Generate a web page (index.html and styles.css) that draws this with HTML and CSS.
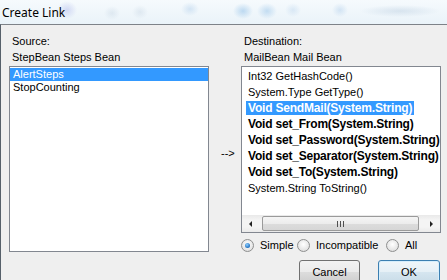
FILE: index.html
```html
<!DOCTYPE html>
<html lang="en">
<head>
    <meta charset="UTF-8">
    <title>Create Link</title>
    <link rel="stylesheet" href="styles.css">
</head>
<body>
    <div class="dialog">
        <div class="titlebar">
            <span class="title">Create Link</span>
        </div>

        <div class="client">
            <div class="pane">
                <div class="caption">Source:</div>
                <div class="caption">StepBean Steps Bean</div>
                <ul class="listbox source-list">
                    <li class="selected">AlertSteps</li>
                    <li>StopCounting</li>
                </ul>
            </div>

            <div class="link-arrow">--&gt;</div>

            <div class="pane">
                <div class="caption">Destination:</div>
                <div class="caption">MailBean Mail Bean</div>
                <div class="listbox dest-list">
                    <ul class="members">
                        <li><span>Int32 GetHashCode()</span></li>
                        <li><span>System.Type GetType()</span></li>
                        <li class="match selected"><span>Void SendMail(System.String)</span></li>
                        <li class="match"><span>Void set_From(System.String)</span></li>
                        <li class="match"><span>Void set_Password(System.String)</span></li>
                        <li class="match"><span>Void set_Separator(System.String)</span></li>
                        <li class="match"><span>Void set_To(System.String)</span></li>
                        <li><span>System.String ToString()</span></li>
                    </ul>
                    <div class="hscroll">
                        <div class="scroll-btn"><i class="tri-left"></i></div>
                        <div class="scroll-track">
                            <div class="scroll-thumb"><span class="grip"></span></div>
                        </div>
                        <div class="scroll-btn"><i class="tri-right"></i></div>
                    </div>
                </div>

                <div class="filters">
                    <label class="radio simple checked"><span class="dot"></span>Simple</label>
                    <label class="radio incompatible"><span class="dot"></span>Incompatible</label>
                    <label class="radio"><span class="dot"></span>All</label>
                </div>

                <div class="buttons">
                    <button class="btn cancel">Cancel</button>
                    <button class="btn ok">OK</button>
                </div>
            </div>
        </div>
    </div>
</body>
</html>
```

FILE: styles.css
```css
body {
    margin: 0;
    padding: 0;
    width: 447px;
    height: 280px;
    overflow: hidden;
    font-family: "Liberation Sans", Arial, sans-serif;
    font-size: 11px;
    color: #000;
    background-color: #efefef;
}

.dialog {
    display: flex;
    flex-direction: column;
    height: 280px;
    overflow: hidden;
}

/* aero glass caption, blurred desktop behind it */
.titlebar {
    flex-shrink: 0;
    height: 24px;
    display: flex;
    align-items: center;
    padding-left: 2px;
    background-color: #f2f7fb;
    background-image:
        radial-gradient(ellipse 10px 9px at 67px 10px, rgba(150, 160, 230, 0.35), transparent),
        radial-gradient(ellipse 8px 7px at 112px 13px, rgba(170, 190, 210, 0.25), transparent),
        radial-gradient(ellipse 8px 7px at 140px 12px, rgba(170, 190, 210, 0.25), transparent),
        radial-gradient(ellipse 9px 7px at 190px 9px, rgba(120, 170, 220, 0.25), transparent),
        radial-gradient(ellipse 10px 8px at 243px 11px, rgba(90, 160, 220, 0.35), transparent),
        radial-gradient(ellipse 10px 8px at 267px 11px, rgba(90, 160, 220, 0.3), transparent),
        radial-gradient(ellipse 8px 7px at 293px 10px, rgba(120, 170, 220, 0.2), transparent),
        radial-gradient(ellipse 8px 7px at 340px 10px, rgba(120, 170, 220, 0.25), transparent),
        radial-gradient(ellipse 40px 6px at 400px 11px, rgba(140, 170, 200, 0.25), transparent),
        linear-gradient(#f6fafd, #eaf3f9);
}

.title {
    font-family: "Noto Sans", "Open Sans", sans-serif;
    font-size: 12px;
    color: #000;
}

.client {
    flex: 1;
    min-height: 0;
    display: flex;
    align-items: flex-start;
    padding: 8px 0 0 8px;
    border-top: 1px solid #7d8288;
    border-left: 1px solid #56606a;
    background-color: #efefef;
}

.pane {
    width: 200px;
    display: flex;
    flex-direction: column;
}

.pane > * {
    flex-shrink: 0;
}

.caption {
    height: 16px;
    line-height: 16px;
    padding-left: 3px;
}

.listbox {
    margin: 1px 0 0 0;
    padding: 0;
    list-style: none;
    background-color: #fff;
    border: 1px solid #828790;
    box-sizing: border-box;
}

.source-list {
    height: 186px;
    padding-top: 1px;
}

.source-list li {
    height: 13px;
    line-height: 13px;
    padding-left: 3px;
}

.source-list li.selected {
    background-color: #3399ff;
    color: #fff;
}

.link-arrow {
    width: 20px;
    padding: 113px 0 0 12px;
    line-height: 14px;
}

.dest-list {
    height: 167px;
    display: flex;
    flex-direction: column;
}

.members {
    flex: 1;
    margin: 0;
    padding: 1px 0 0 4px;
    list-style: none;
    overflow: hidden;
    white-space: nowrap;
}

.members li {
    height: 16px;
}

.members span {
    display: inline-block;
    margin-top: 1px;
    padding: 0 2px;
    line-height: 14px;
}

.members li.match span {
    font-weight: bold;
    font-size: 12px;
    letter-spacing: -0.2px;
}

.members li.selected span {
    background-color: #3399ff;
    color: #fff;
}

.hscroll {
    height: 17px;
    flex-shrink: 0;
    display: flex;
    background: linear-gradient(#e9e9e9, #f4f4f4 30%, #f4f4f4 70%, #eaeaea);
}

.scroll-btn {
    width: 17px;
    display: flex;
    align-items: center;
    justify-content: center;
}

.tri-left {
    border-top: 3px solid transparent;
    border-bottom: 3px solid transparent;
    border-right: 3px solid #222;
}

.tri-right {
    border-top: 3px solid transparent;
    border-bottom: 3px solid transparent;
    border-left: 3px solid #222;
}

.scroll-track {
    flex: 1;
    display: flex;
    padding: 1px 0;
}

.scroll-thumb {
    width: 155px;
    margin-left: 3px;
    display: flex;
    align-items: center;
    justify-content: center;
    border: 1px solid #9a9a9a;
    border-radius: 2px;
    background: linear-gradient(#f5f5f5, #ececec 50%, #dcdcdc 51%, #d6d6d6);
}

.grip {
    width: 7px;
    height: 6px;
    background: repeating-linear-gradient(to right, #505050 0 1px, transparent 1px 3px);
}

.filters {
    display: flex;
    align-items: center;
    height: 14px;
    margin-top: 5px;
}

.radio {
    display: flex;
    align-items: center;
    gap: 6px;
}

.radio.simple {
    width: 56px;
}

.radio.incompatible {
    width: 89px;
}

.dot {
    width: 11px;
    height: 11px;
    border: 1px solid #8e8f8f;
    border-radius: 50%;
    background: radial-gradient(circle at 50% 40%, #ffffff, #e3e3e3 70%, #cfcfcf);
    display: flex;
    align-items: center;
    justify-content: center;
}

.radio.checked .dot::after {
    content: "";
    width: 5px;
    height: 5px;
    border-radius: 50%;
    background: radial-gradient(circle at 40% 35%, #8fd0ff, #1f6fc0 70%, #134f92);
}

.buttons {
    display: flex;
    justify-content: flex-end;
    gap: 18px;
    margin-top: 8px;
    padding-right: 1px;
}

.btn {
    width: 61px;
    height: 23px;
    padding: 0;
    font-family: "Liberation Sans", Arial, sans-serif;
    font-size: 11px;
    color: #000;
    border: 1px solid #707070;
    border-radius: 3px;
    background: linear-gradient(#f2f2f2, #ebebeb 50%, #dddddd 51%, #cfcfcf);
}

.btn.ok {
    width: 62px;
    border-color: #3c7fb1;
    box-shadow: inset 0 0 0 1px #d6eefc;
    background: linear-gradient(#f0f6fa, #e6f0f6 50%, #d6e6f0 51%, #c9dce8);
}
```
